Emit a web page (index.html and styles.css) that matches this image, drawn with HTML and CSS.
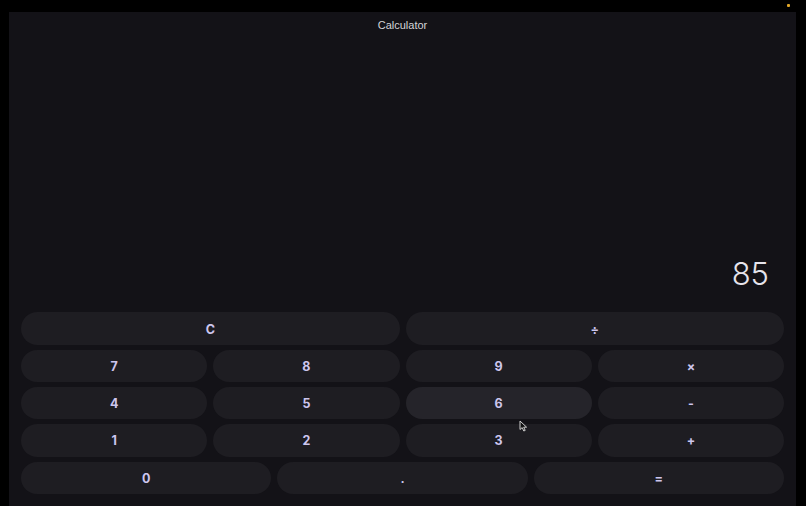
FILE: index.html
```html
<!DOCTYPE html>
<html>
<head>
<meta charset="utf-8">
<link rel="stylesheet" href="styles.css">
</head>
<body>
<span class="dot"></span>
<div class="window">
  <div class="titlebar">Calculator</div>
  <div class="display"><span class="value">85</span></div>
  <div class="keypad">
    <div class="row">
      <button class="key">C</button>
      <button class="key">÷</button>
    </div>
    <div class="row">
      <button class="key">7</button>
      <button class="key">8</button>
      <button class="key">9</button>
      <button class="key">×</button>
    </div>
    <div class="row">
      <button class="key">4</button>
      <button class="key">5</button>
      <button class="key hover">6</button>
      <button class="key">-</button>
    </div>
    <div class="row">
      <button class="key">1</button>
      <button class="key">2</button>
      <button class="key">3</button>
      <button class="key">+</button>
    </div>
    <div class="row">
      <button class="key">0</button>
      <button class="key">.</button>
      <button class="key">=</button>
    </div>
  </div>
</div>
<svg class="cursor" width="9" height="12" viewBox="0 0 9 12"><path d="M1 1 L1 9.5 L3.2 7.6 L4.8 11 L6.2 10.4 L4.7 7.2 L7.6 7.2 Z" fill="#111" stroke="#cfcfcf" stroke-width="1"/></svg>
</body>
</html>
```
FILE: styles.css
```css
html, body {
  margin: 0;
  padding: 0;
  background: #000;
  width: 806px;
  height: 506px;
  overflow: hidden;
  position: relative;
  font-family: Inter, "Noto Sans", sans-serif;
}
.dot {
  position: absolute;
  left: 787px;
  top: 4px;
  width: 3px;
  height: 3px;
  background: #e2a728;
  border-radius: 1px;
}
.window {
  margin: 12px 0 0 9px;
  width: 787px;
  height: 494px;
  background: #131217;
  display: flex;
  flex-direction: column;
  box-sizing: border-box;
  padding-bottom: 12px;
}
.titlebar {
  height: 27px;
  line-height: 27px;
  text-align: center;
  color: #d4d4d8;
  font-family: "Liberation Sans", Arial, sans-serif;
  font-size: 11px;
}
.display {
  flex: 1;
  display: flex;
  align-items: flex-end;
  justify-content: flex-end;
  padding: 0 27px 20px 0;
}
.value {
  font-size: 31px;
  line-height: 36px;
  font-weight: 300;
  color: #e6e4ec;
}
.keypad {
  display: flex;
  flex-direction: column;
  gap: 4.8px;
  padding: 0 12px;
}
.row {
  display: flex;
  gap: 6px;
}
.key {
  flex: 1;
  height: 32.5px;
  border: none;
  border-radius: 17px;
  background: #1e1d22;
  color: #cdc6ee;
  font-family: Inter, "Noto Sans", sans-serif;
  font-weight: 700;
  font-size: 12.5px;
  padding: 1px 0 0;
}
.key.hover {
  background: #25242a;
}
.cursor {
  position: absolute;
  left: 519px;
  top: 420px;
}
```
